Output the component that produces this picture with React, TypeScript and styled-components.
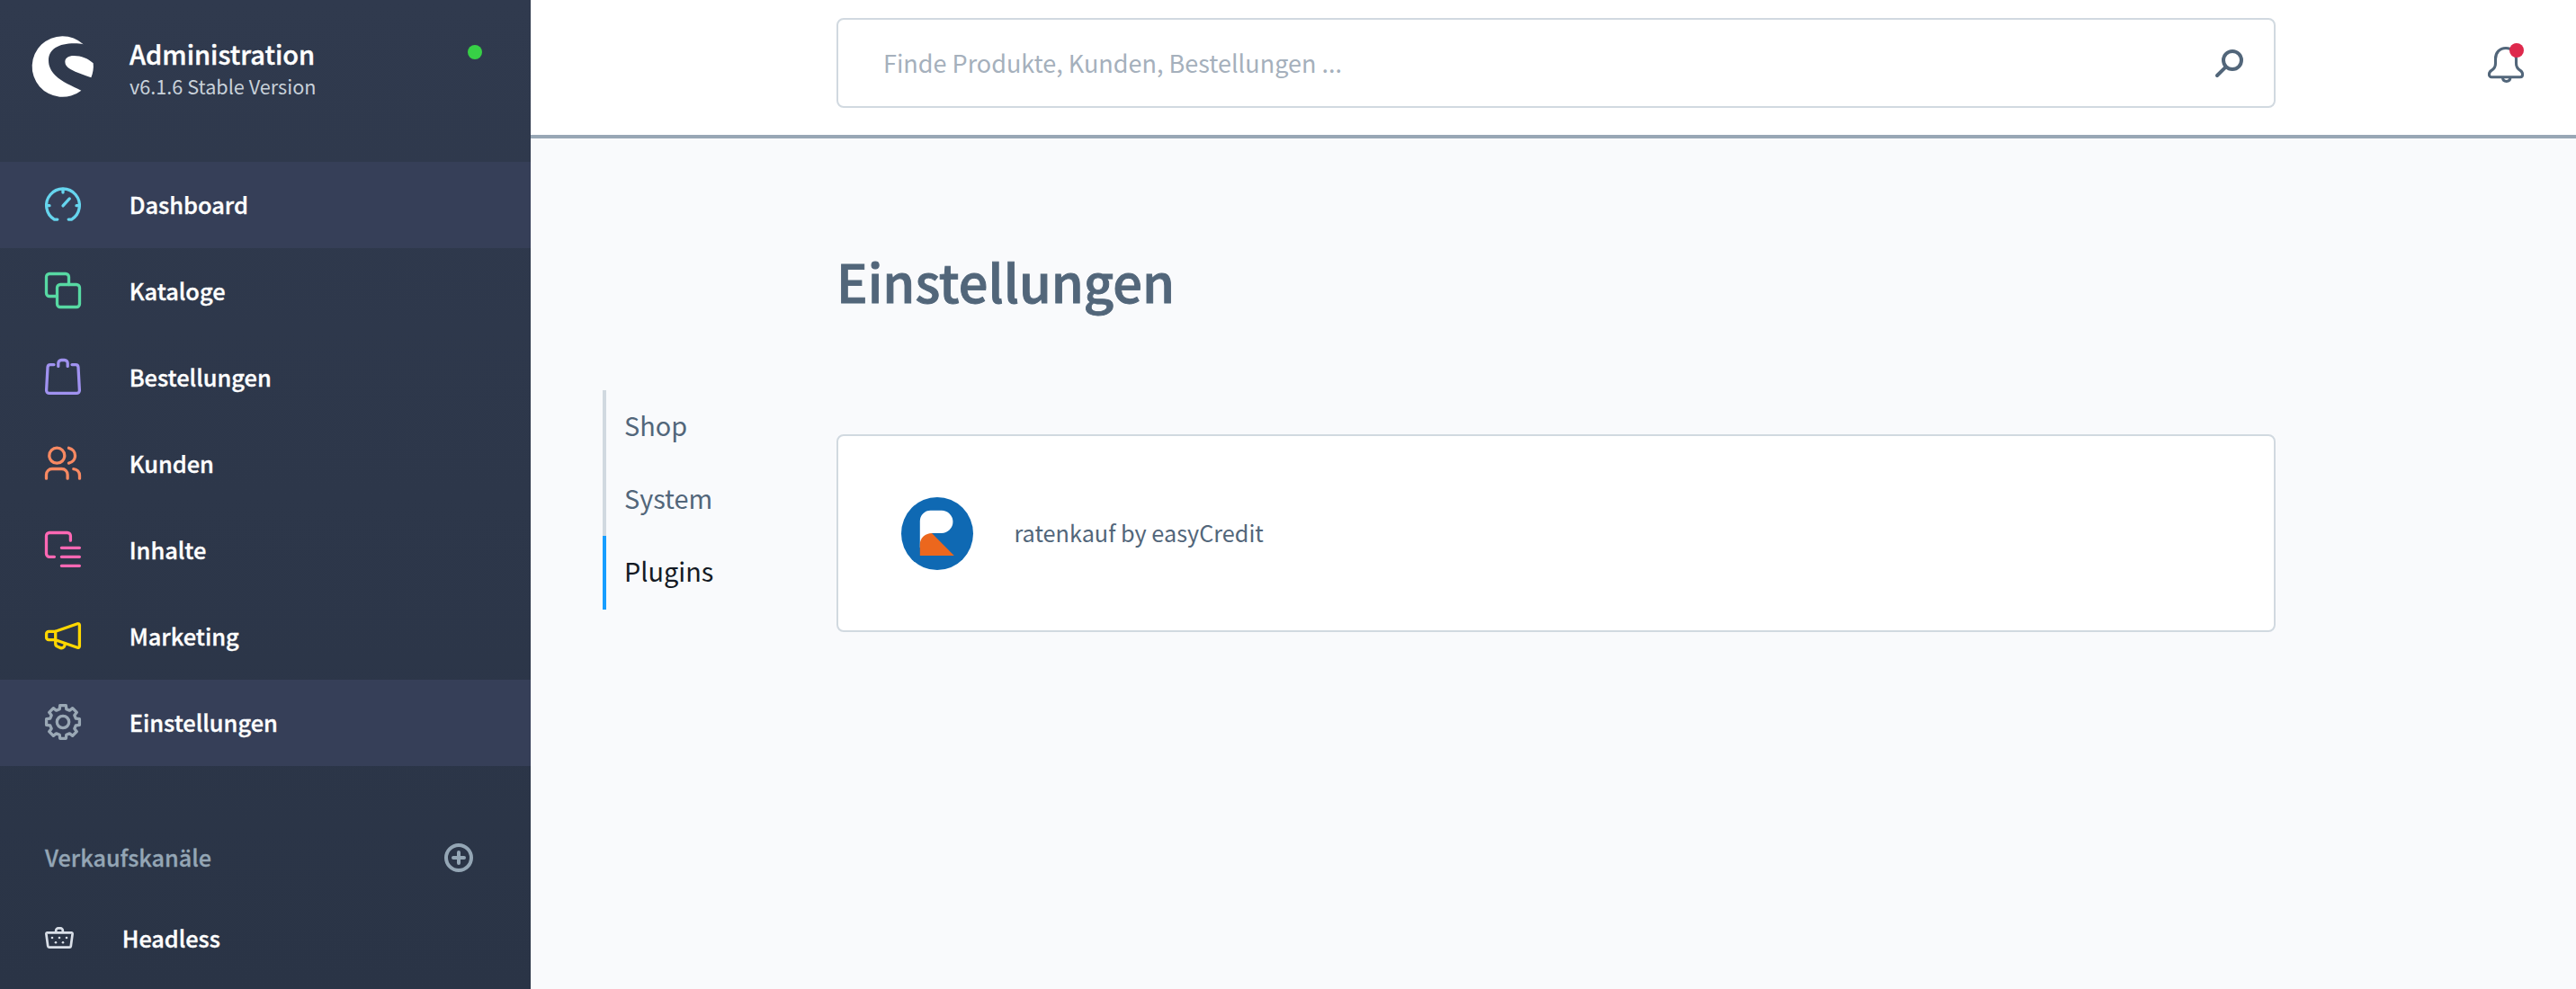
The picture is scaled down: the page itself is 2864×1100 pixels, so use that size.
import React from 'react';
import styled, { createGlobalStyle } from 'styled-components';

const GlobalStyle = createGlobalStyle`
  *, *::before, *::after { box-sizing: border-box; }
  body {
    margin: 0;
    background: #f9fafc;
    font-family: "Noto Sans CJK SC", "Noto Sans", sans-serif;
    -webkit-font-smoothing: antialiased;
  }
  svg { display: block; flex: none; overflow: visible; }
`;

const Page = styled.div`
  display: flex;
  width: 2864px;
  height: 1100px;
  overflow: hidden;
`;

/* Sidebar */

const Sidebar = styled.aside`
  flex: none;
  width: 590px;
  height: 100%;
  color: #fff;
  background: linear-gradient(#303a4e, #2a3446);
`;

const Brand = styled.header`
  display: flex;
  align-items: flex-start;
  height: 180px;
  padding: 40px 54px 0 36px;
`;

const BrandText = styled.div`
  display: flex;
  flex-direction: column;
  flex: 1;
  margin-left: 40px;
  padding-top: 1px;
`;

const BrandTitle = styled.span`
  font-size: 29px;
  font-weight: 500;
  line-height: 36px;
  -webkit-text-stroke: 0.4px currentColor;
`;

const BrandVersion = styled.span`
  font-size: 21.65px;
  line-height: 37px;
  color: #c8d1da;
`;

const StatusDot = styled.span`
  width: 16px;
  height: 16px;
  margin-top: 10px;
  border-radius: 50%;
  background: #37d046;
`;

const Menu = styled.nav`
  display: flex;
  flex-direction: column;
`;

const MenuItem = styled.a<{ $active?: boolean }>`
  display: flex;
  align-items: center;
  gap: 53.7px;
  height: 96px;
  padding: 0 50px 2px;
  background: ${(p) => (p.$active ? '#363f58' : 'transparent')};
`;

const MenuLabel = styled.span`
  padding-bottom: 1px;
  font-size: 25.4px;
  font-weight: 500;
  line-height: 40px;
  -webkit-text-stroke: 0.35px currentColor;
`;

const ChannelHeader = styled.div`
  display: flex;
  align-items: center;
  justify-content: space-between;
  height: 48px;
  margin-top: 78px;
  padding: 0 64px 0 50px;
  color: #94a6b5;
`;

const ChannelTitle = styled.span`
  padding-bottom: 2px;
  font-size: 25.25px;
  font-weight: 500;
  line-height: 40px;
  -webkit-text-stroke: 0.3px currentColor;
`;

const ChannelItem = styled.a`
  display: flex;
  align-items: center;
  gap: 53.7px;
  height: 60px;
  margin-top: 35px;
  padding-left: 50px;
  font-size: 25.25px;
  font-weight: 500;
  line-height: 40px;
  -webkit-text-stroke: 0.35px currentColor;
`;

/* Content */

const Content = styled.div`
  display: flex;
  flex-direction: column;
  flex: 1;
`;

const Topbar = styled.header`
  display: flex;
  align-items: flex-start;
  justify-content: space-between;
  height: 154px;
  padding: 20px 58px 0 340px;
  background: #fff;
  border-bottom: 4px solid #98a7b5;
`;

const SearchBox = styled.div`
  display: flex;
  align-items: center;
  justify-content: space-between;
  width: 1600px;
  height: 100px;
  padding: 0 33px 0 50px;
  border: 2px solid #d1d9e0;
  border-radius: 8px;
  color: #52667a;
`;

const Placeholder = styled.span`
  padding-bottom: 1px;
  font-size: 27px;
  line-height: 39px;
  color: #a5b0bc;
`;

const SearchButton = styled.span`
  padding-top: 2px;
`;

const BellButton = styled.span`
  position: relative;
  margin-top: 32px;
  color: #52667a;
`;

const BellBadge = styled.span`
  position: absolute;
  top: -4px;
  right: 0;
  width: 16px;
  height: 16px;
  border-radius: 50%;
  background: #de294c;
`;

const Body = styled.main`
  display: grid;
  grid-template-columns: 260px 1600px;
  align-items: start;
  padding-left: 80px;
`;

const Tabs = styled.nav`
  display: flex;
  flex-direction: column;
  margin-top: 280px;
`;

const Tab = styled.a<{ $active?: boolean }>`
  display: flex;
  align-items: center;
  height: ${(p) => (p.$active ? 82 : 81)}px;
  padding: 0 0 ${(p) => (p.$active ? 4 : 3)}px 20px;
  border-left: 4px solid ${(p) => (p.$active ? '#189eff' : '#d1d9e0')};
  font-size: 28.85px;
  line-height: 44px;
  color: ${(p) => (p.$active ? '#141a24' : '#52667a')};
`;

const Title = styled.h1`
  margin: 118px 0 0;
  font-size: 57.8px;
  font-weight: 500;
  line-height: 80px;
  color: #52667a;
  -webkit-text-stroke: 0.9px currentColor;
`;

const Card = styled.section`
  display: flex;
  align-items: center;
  gap: 45.5px;
  height: 220px;
  margin-top: 131px;
  padding: 0 70px;
  background: #fff;
  border: 2px solid #d1d9e0;
  border-radius: 8px;
`;

const PluginName = styled.span`
  padding-bottom: 2px;
  font-size: 25.25px;
  line-height: 40px;
  color: #52667a;
`;

/* Icons */

const Icon = ({ color, children }: { color: string; children: React.ReactNode }) => (
  <svg
    width="40"
    height="40"
    viewBox="0 0 40 40"
    fill="none"
    stroke={color}
    strokeWidth="3.3"
    strokeLinecap="round"
    strokeLinejoin="round"
  >
    {children}
  </svg>
);

const gearPoints = Array.from({ length: 8 }, (_, k) => {
  const a = (k * Math.PI) / 4;
  return [
    [-3.8, -14.3],
    [-3.3, -18.4],
    [3.3, -18.4],
    [3.8, -14.3],
  ]
    .map(([x, y]) =>
      [20 + x * Math.cos(a) - y * Math.sin(a), 20 + x * Math.sin(a) + y * Math.cos(a)]
        .map((v) => v.toFixed(2))
        .join(',')
    )
    .join(' ');
}).join(' ');

const icons = {
  dashboard: (
    <Icon color="#66d5ee">
      <path d="M13.8 37.1H10.4A18.4 18.4 0 1 1 29.6 37.1H26.2" />
      <path d="M20 3.5V7M1.8 21.7H5M38.2 21.7H35M20 21.9L27.3 13.9" />
    </Icon>
  ),
  catalogues: (
    <Icon color="#57d9a3">
      <path d="M26.5 13.5V5A3.5 3.5 0 0 0 23 1.5H5A3.5 3.5 0 0 0 1.5 5V23A3.5 3.5 0 0 0 5 26.5H13.5" />
      <rect x="13.5" y="13.5" width="25" height="25" rx="3.5" />
    </Icon>
  ),
  orders: (
    <Icon color="#a092f0">
      <path d="M10 6.6H6A3 3 0 0 0 3 9.4L1.6 35.2A3.2 3.2 0 0 0 4.8 38.4H35.2A3.2 3.2 0 0 0 38.4 35.2L37 9.4A3 3 0 0 0 34 6.6H30" />
      <path d="M14.8 8.4V5A3.5 3.5 0 0 1 18.3 1.5H21.7A3.5 3.5 0 0 1 25.2 5V8.4" />
    </Icon>
  ),
  customers: (
    <Icon color="#f88962">
      <circle cx="13.3" cy="11.7" r="8.5" />
      <path d="M26.5 3.3C30.6 4.2 33.5 7.4 33.5 11.7S30.6 19.2 26.5 20.1" />
      <path d="M1.5 37.2V33A6.5 6.5 0 0 1 8 26.5H18.6A6.5 6.5 0 0 1 25.1 33V37.2M31.8 26.6C35.8 27 38.5 29.8 38.5 34V37.2" />
    </Icon>
  ),
  content: (
    <Icon color="#ff68b4">
      <path d="M28.4 10.2V5A3.5 3.5 0 0 0 24.9 1.5H5A3.5 3.5 0 0 0 1.5 5V24.8A3.5 3.5 0 0 0 5 28.3H10.4" />
      <path d="M18.4 18.3H38.4M18.4 28.3H38.4M18.4 38.3H38.4" />
    </Icon>
  ),
  marketing: (
    <Icon color="#ffd700">
      <path d="M11.7 15.3L36.1 6.7A1.7 1.7 0 0 1 38.4 8.3V31.7A1.7 1.7 0 0 1 36.1 33.3L11.7 24.7Z" />
      <path d="M11.7 15.3H4.2A2.6 2.6 0 0 0 1.6 17.9V22.1A2.6 2.6 0 0 0 4.2 24.7H11.7" />
      <path d="M11.7 25V28.8A3.6 3.6 0 0 0 14.2 32.3L17.4 33.6A3.6 3.6 0 0 0 21.8 31.2L22.3 29" />
    </Icon>
  ),
  settings: (
    <Icon color="#9aa8b5">
      <polygon points={gearPoints} />
      <circle cx="20" cy="20" r="6.7" />
    </Icon>
  ),
};

const Logo = () => (
  <svg width="68" height="68" viewBox="18 18 204 204" fill="#fff">
    <path d="M188 46A101.5 101.5 0 1 0 181 200C150 184 118 173 95 150C79 134 72 118 72 100C72 62 105 43 158 43C170 43 180 44 188 46Z" />
    <path d="M127 104C127 91 139 84 156 84C182 84 203 93 221 109C223 126 220 142 214 157C192 148 165 141 145 129C133 122 127 114 127 104Z" />
  </svg>
);

const PlusCircle = () => (
  <svg width="32" height="32" viewBox="0 0 32 32" fill="none" stroke="currentColor" strokeWidth="4" strokeLinecap="round">
    <circle cx="16" cy="16" r="14" />
    <path d="M16 10V22M10 16H22" />
  </svg>
);

const Basket = () => (
  <svg width="32" height="24" viewBox="0 0 32 24" fill="none" stroke="#d9dfe8" strokeWidth="2.7" strokeLinejoin="round">
    <path d="M2.6 6.4H29.4A1.2 1.2 0 0 1 30.6 7.7L28.8 21.2A1.6 1.6 0 0 1 27.2 22.6H4.8A1.6 1.6 0 0 1 3.2 21.2L1.4 7.7A1.2 1.2 0 0 1 2.6 6.4Z" />
    <path d="M12.2 6.4V4A2.6 2.6 0 0 1 14.8 1.4H17.2A2.6 2.6 0 0 1 19.8 4V6.4" />
    <g fill="#d9dfe8" stroke="none">
      <circle cx="8" cy="12" r="1.3" />
      <circle cx="16" cy="12" r="1.3" />
      <circle cx="24" cy="12" r="1.3" />
      <circle cx="12" cy="17.3" r="1.3" />
      <circle cx="20" cy="17.3" r="1.3" />
    </g>
  </svg>
);

const SearchIcon = () => (
  <svg width="32" height="32" viewBox="0 0 32 32" fill="none" stroke="currentColor" strokeWidth="4" strokeLinecap="round">
    <circle cx="19" cy="12" r="10" />
    <path d="M11.5 19.6L2 29" />
  </svg>
);

const Bell = () => (
  <svg width="40" height="40" viewBox="0 0 40 40" fill="none" stroke="currentColor" strokeWidth="3.1" strokeLinejoin="round">
    <path d="M8.5 13.5C8.5 6.6 13 1.5 20 1.5S31.5 6.6 31.5 13.5V18.5C31.5 22.6 33.4 24.8 36 26.4C37.6 27.4 38.5 28.8 38.5 30.6V31.2A2.5 2.5 0 0 1 36 33.7H4A2.5 2.5 0 0 1 1.5 31.2V30.6C1.5 28.8 2.4 27.4 4 26.4C6.6 24.8 8.5 22.6 8.5 18.5Z" />
    <path d="M16.4 34C16.6 36.8 18.3 38.5 20.7 38.5S24.8 36.8 25 34" />
  </svg>
);

const PluginLogo = () => (
  <svg width="80" height="81" viewBox="0 0 80 81">
    <ellipse cx="40" cy="40.5" rx="40" ry="40.5" fill="#0f69b3" />
    <path d="M20.8 56V26.5A11.8 11.8 0 0 1 32.6 14.7H44.8A12.6 12.6 0 0 1 44.8 40H34L28 52Z" fill="#fff" />
    <path d="M20.8 65V52.5C20.8 45 27 40 34 40L58.8 65Z" fill="#ec671d" />
  </svg>
);

const menu: { label: string; icon: keyof typeof icons; active?: boolean }[] = [
  { label: 'Dashboard', icon: 'dashboard', active: true },
  { label: 'Kataloge', icon: 'catalogues' },
  { label: 'Bestellungen', icon: 'orders' },
  { label: 'Kunden', icon: 'customers' },
  { label: 'Inhalte', icon: 'content' },
  { label: 'Marketing', icon: 'marketing' },
  { label: 'Einstellungen', icon: 'settings', active: true },
];

const tabs = ['Shop', 'System', 'Plugins'];

export default function App() {
  return (
    <>
      <GlobalStyle />
      <Page>
        <Sidebar>
          <Brand>
            <Logo />
            <BrandText>
              <BrandTitle>Administration</BrandTitle>
              <BrandVersion>v6.1.6 Stable Version</BrandVersion>
            </BrandText>
            <StatusDot />
          </Brand>
          <Menu>
            {menu.map((m) => (
              <MenuItem key={m.label} $active={m.active}>
                {icons[m.icon]}
                <MenuLabel>{m.label}</MenuLabel>
              </MenuItem>
            ))}
          </Menu>
          <ChannelHeader>
            <ChannelTitle>Verkaufskanäle</ChannelTitle>
            <PlusCircle />
          </ChannelHeader>
          <ChannelItem>
            <Basket />
            Headless
          </ChannelItem>
        </Sidebar>
        <Content>
          <Topbar>
            <SearchBox>
              <Placeholder>Finde Produkte, Kunden, Bestellungen ...</Placeholder>
              <SearchButton>
                <SearchIcon />
              </SearchButton>
            </SearchBox>
            <BellButton>
              <Bell />
              <BellBadge />
            </BellButton>
          </Topbar>
          <Body>
            <Tabs>
              {tabs.map((t) => (
                <Tab key={t} $active={t === 'Plugins'}>
                  {t}
                </Tab>
              ))}
            </Tabs>
            <div>
              <Title>Einstellungen</Title>
              <Card>
                <PluginLogo />
                <PluginName>ratenkauf by easyCredit</PluginName>
              </Card>
            </div>
          </Body>
        </Content>
      </Page>
    </>
  );
}
